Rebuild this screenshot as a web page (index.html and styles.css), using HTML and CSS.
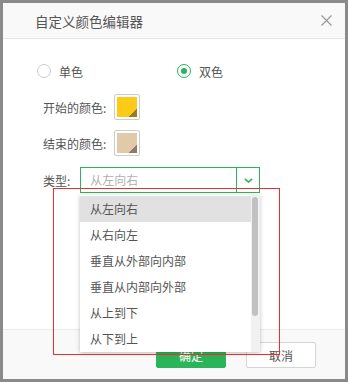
FILE: index.html
```html
<!DOCTYPE html>
<html lang="zh-CN">
<head>
  <meta charset="UTF-8">
  <title>自定义颜色编辑器</title>
  <link rel="stylesheet" href="styles.css">
</head>
<body>
  <div class="dialog">
    <!-- cabeçalho -->
    <div class="dialog-header">
      <span class="dialog-title">自定义颜色编辑器</span>
      <svg class="close" width="11" height="11" viewBox="0 0 11 11">
        <path d="M0.5 0.5 L10.5 10.5 M10.5 0.5 L0.5 10.5" stroke="#999" stroke-width="1.2" fill="none"/>
      </svg>
    </div>

    <div class="dialog-body">
      <div class="radio-row">
        <label class="radio"><span class="radio-dot"></span>单色</label>
        <label class="radio checked"><span class="radio-dot"></span>双色</label>
      </div>

      <div class="field">
        <span class="field-label">开始的颜色:</span>
        <span class="swatch"><span class="swatch-fill yellow"></span></span>
      </div>

      <div class="field">
        <span class="field-label">结束的颜色:</span>
        <span class="swatch"><span class="swatch-fill beige"></span></span>
      </div>

      <div class="field field-type">
        <span class="field-label">类型:</span>
        <div class="select">
          <span class="select-value">从左向右</span>
          <span class="select-arrow">
            <svg width="9" height="5" viewBox="0 0 9 5">
              <path d="M0.8 0.8 L4.5 4 L8.2 0.8" stroke="#2bb55a" stroke-width="1.6" fill="none"/>
            </svg>
          </span>
        </div>

        <!-- lista aberta -->
        <div class="dropdown">
          <ul class="options">
            <li class="active">从左向右</li>
            <li>从右向左</li>
            <li>垂直从外部向内部</li>
            <li>垂直从内部向外部</li>
            <li>从上到下</li>
            <li>从下到上</li>
          </ul>
          <div class="scrollbar"><div class="thumb"></div></div>
        </div>
      </div>
    </div>

    <div class="dialog-footer">
      <button class="btn btn-primary">确定</button>
      <button class="btn">取消</button>
    </div>

    <div class="mark"></div>
  </div>
</body>
</html>
```

FILE: styles.css
```css
body {
  margin: 0;
  padding: 3px 3px 3px 3px;
  background: #8a8a8a;
  font-family: "Noto Sans CJK SC", "Noto Sans", sans-serif;
  font-size: 12px;
  color: #555;
}

.dialog {
  position: relative;
  width: 342px;
  height: 376px;
  background: #ffffff;
  display: flex;
  flex-direction: column;
}

.dialog-header {
  height: 36px;
  box-sizing: border-box;
  background: #f9f9f9;
  border-bottom: 1px solid #e6e6e6;
  display: flex;
  align-items: center;
  justify-content: space-between;
  padding: 0 13px 0 32px;
}

.dialog-title {
  font-size: 13.5px;
  color: #555;
}

.dialog-body {
  flex: 1;
  padding: 19px 0 0 34px;
}

.radio-row {
  display: flex;
  height: 26px;
  align-items: center;
}

.radio {
  display: flex;
  align-items: center;
  width: 140px;
  font-size: 12px;
  color: #555;
}

.radio-dot {
  width: 12px;
  height: 12px;
  border: 1px solid #ccc;
  border-radius: 50%;
  margin-right: 8px;
  position: relative;
}

.radio.checked .radio-dot {
  border-color: #2bb55a;
}

.radio.checked .radio-dot::after {
  content: "";
  position: absolute;
  left: 3px;
  top: 3px;
  width: 6px;
  height: 6px;
  border-radius: 50%;
  background: #2bb55a;
}

.field {
  display: flex;
  align-items: center;
  padding-left: 6px;
  margin-top: 10px;
}

.field-label {
  margin-right: 8px;
}

.swatch {
  width: 26px;
  height: 26px;
  box-sizing: border-box;
  border: 1px solid #ccc;
  border-radius: 2px;
  padding: 2px;
  background: #fff;
}

.swatch-fill {
  display: block;
  width: 20px;
  height: 20px;
}

.yellow {
  background: linear-gradient(135deg, #fdca18 80%, #9a7b20 80%);
}

.beige {
  background: linear-gradient(135deg, #e1c9aa 80%, #8f7c68 80%);
}

.field-type {
  position: relative;
  margin-top: 11px;
}

.select {
  width: 180px;
  height: 26px;
  box-sizing: border-box;
  border: 1px solid #2bb55a;
  display: flex;
  margin-left: 2px;
}

.select-value {
  flex: 1;
  line-height: 24px;
  padding-left: 9px;
  color: #b0b0b0;
}

.select-arrow {
  width: 22px;
  border-left: 1px solid #2bb55a;
  display: flex;
  align-items: center;
  justify-content: center;
}

.dropdown {
  position: absolute;
  left: 43px;
  top: 28px;
  width: 180px;
  height: 157px;
  background: #fff;
  box-shadow: 0 1px 4px rgba(0, 0, 0, 0.25);
  display: flex;
  z-index: 2;
}

.options {
  list-style: none;
  margin: 0;
  padding: 1px 0 0 0;
  flex: 1;
}

.options li {
  height: 26px;
  line-height: 26px;
  padding-left: 10px;
  color: #555;
}

.options li.active {
  background: #e1e1e1;
}

.scrollbar {
  width: 9px;
  background: #f1f1f1;
  padding: 2px 1px;
  box-sizing: border-box;
}

.thumb {
  height: 119px;
  width: 6px;
  border-radius: 3px;
  background: #c1c1c1;
}

.dialog-footer {
  height: 50px;
  box-sizing: border-box;
  background: #f9f9f9;
  border-top: 1px solid #ebebeb;
  display: flex;
  justify-content: flex-end;
  align-items: flex-start;
  gap: 20px;
  padding: 12px 29px 0 0;
}

.btn {
  width: 70px;
  height: 26px;
  border: 1px solid #d5d5d5;
  border-radius: 2px;
  background: #fff;
  color: #555;
  font-family: "Noto Sans CJK SC", "Noto Sans", sans-serif;
  font-size: 12px;
  padding: 0;
}

.btn-primary {
  background: #2bb55a;
  border-color: #2bb55a;
  color: #fff;
}

.mark {
  position: absolute;
  left: 50px;
  top: 185px;
  width: 227px;
  height: 167px;
  box-sizing: border-box;
  border: 1px solid #e8302c;
  z-index: 3;
  pointer-events: none;
}
```
